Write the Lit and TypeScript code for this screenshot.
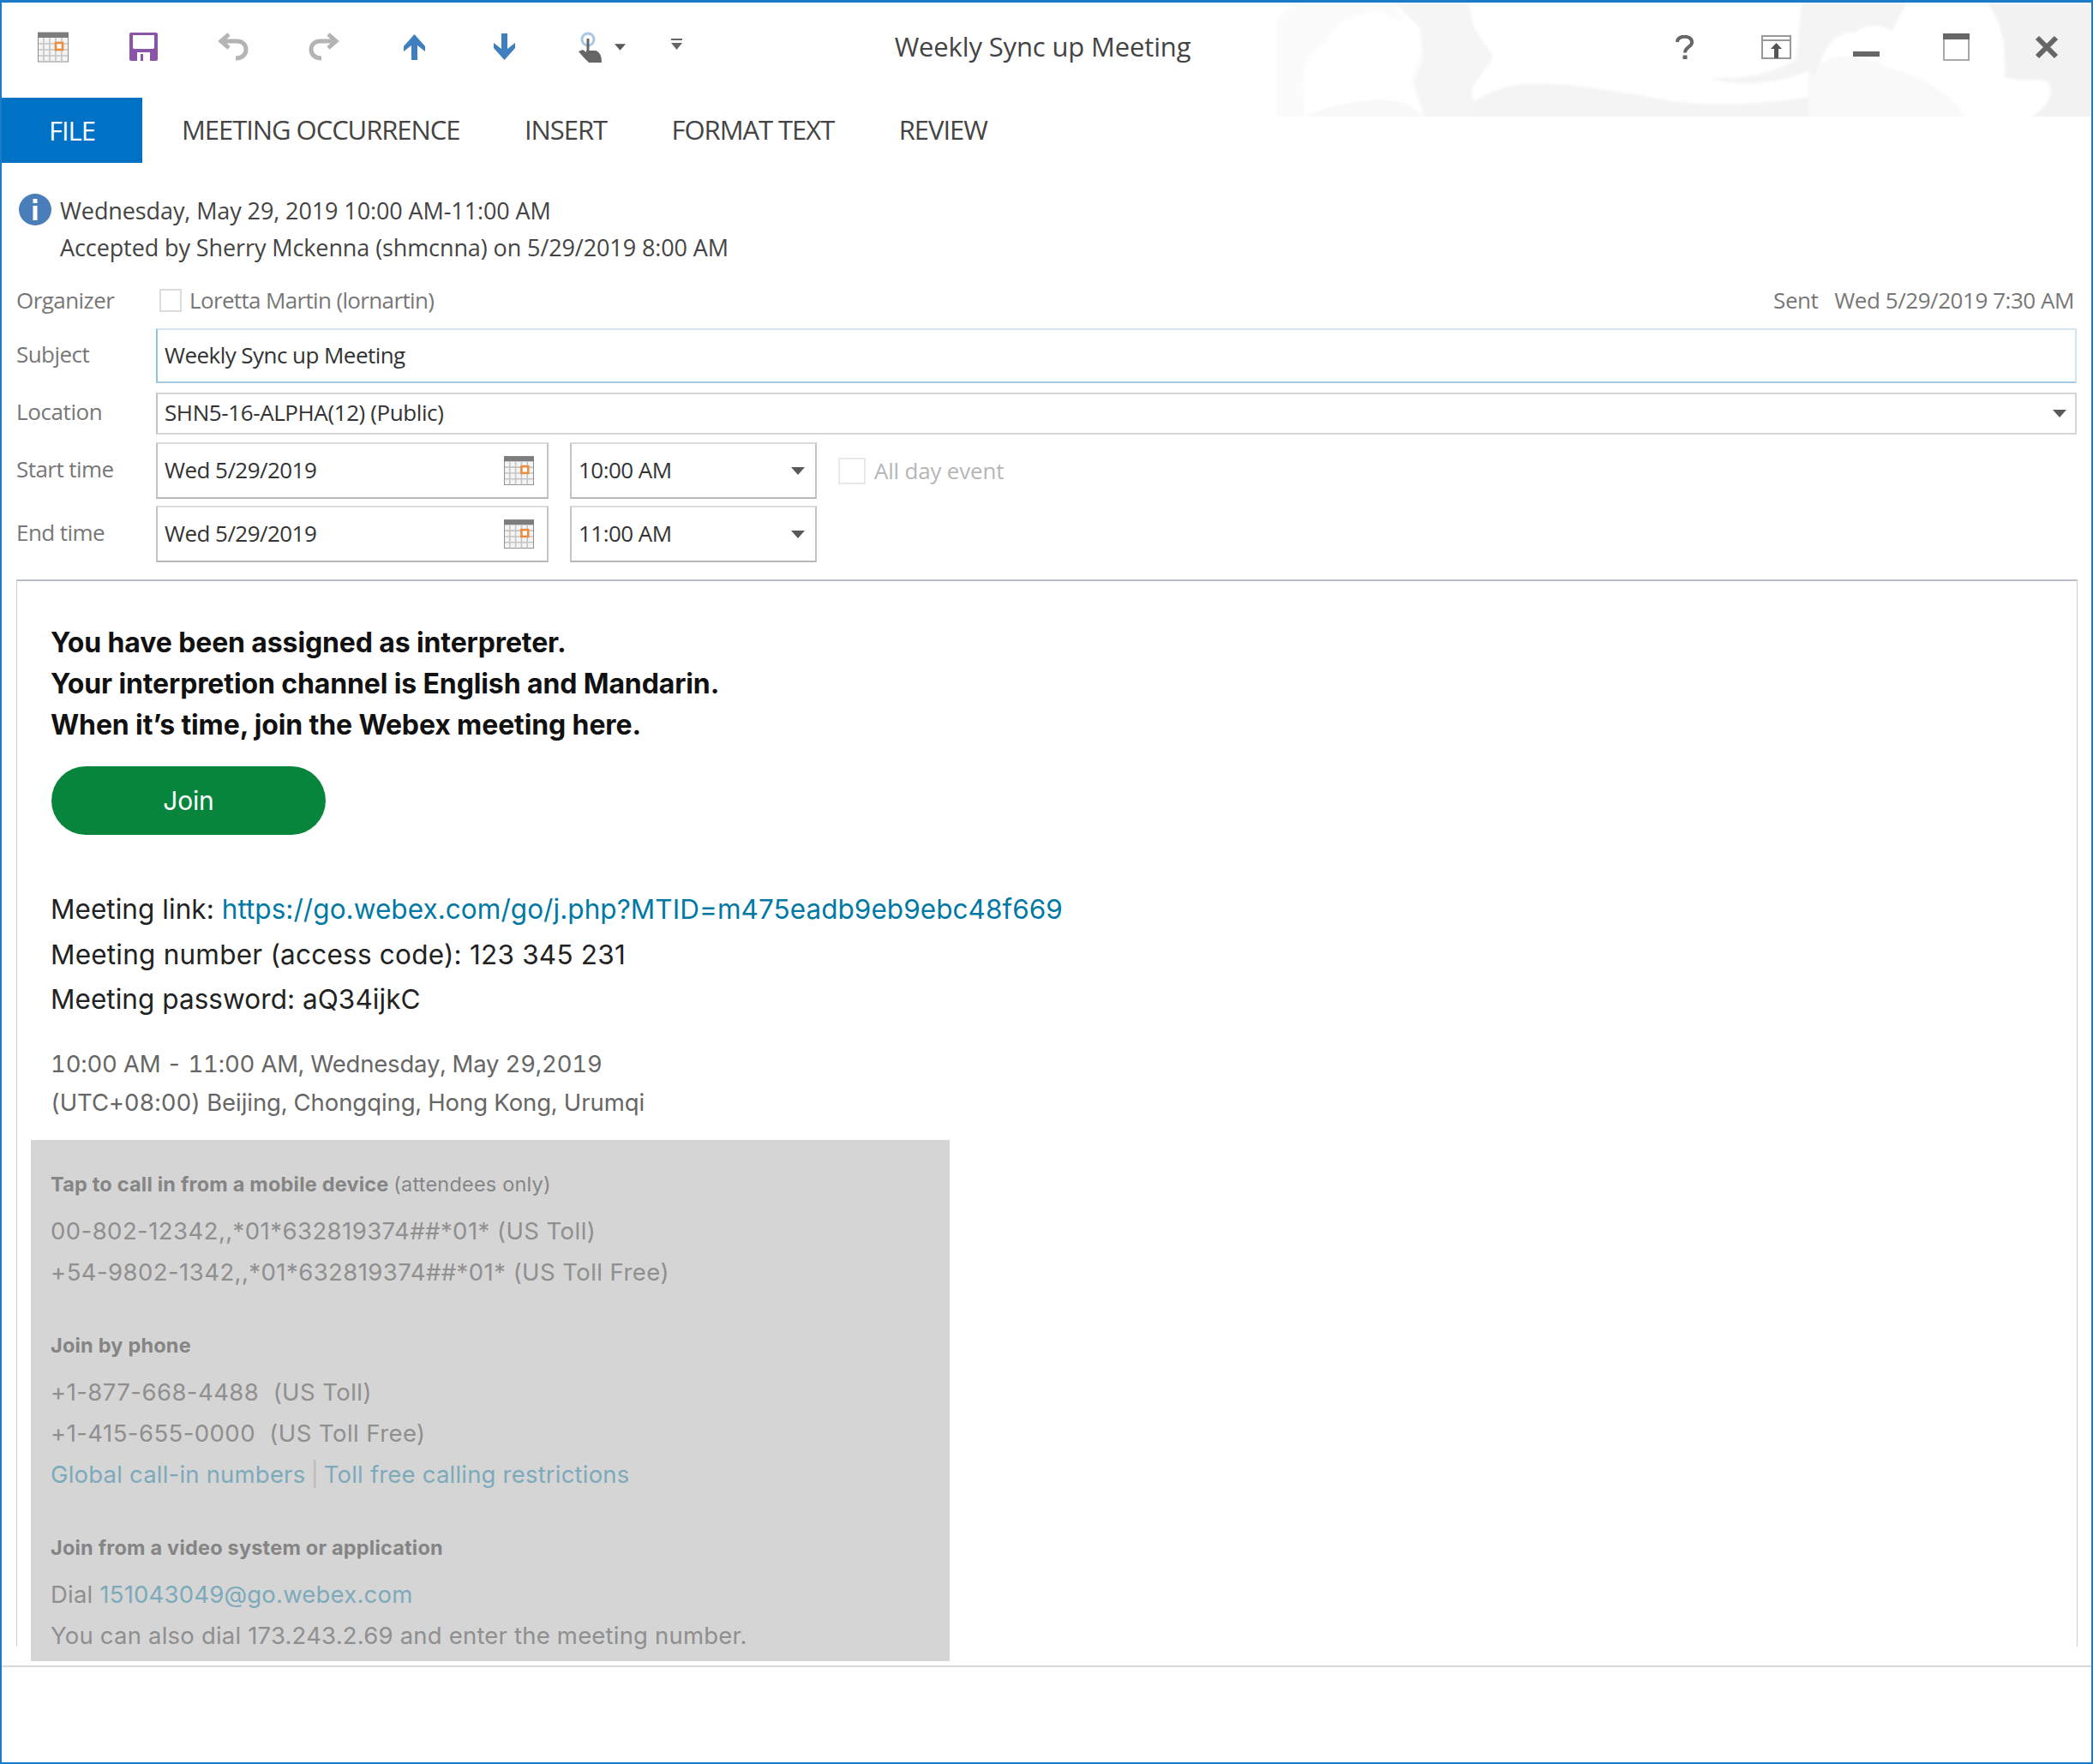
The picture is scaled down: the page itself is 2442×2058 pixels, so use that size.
import { LitElement, html, css, svg } from 'lit';
import { customElement } from 'lit/decorators.js';

const calendar = (w: number, h: number) => html`<svg width=${w} height=${h} viewBox="0 0 36 36">
  <rect x="0.5" y="1" width="35" height="34" fill="#f4f4f4" stroke="#8e8e8e" />
  <rect x="0" y="1" width="36" height="6" fill="#7d7d7d" />
  <path d="M1 14H35M1 21H35M1 28H35M7 7V35M14 7V35M21 7V35M28 7V35" stroke="#c4c4c4" stroke-width="1.6" fill="none" />
  <rect x="21" y="13" width="8" height="8" fill="#fff" stroke="#ed8b3a" stroke-width="2.6" />
</svg>`;

const caret = (w: number, h: number, fill = '#595959') => html`<svg width=${w} height=${h} viewBox="0 0 16 9"><path d="M0 0H16L8 9Z" fill=${fill} /></svg>`;

@customElement('app-root')
export class AppRoot extends LitElement {
  static styles = css`
    :host {
      display: block;
      width: 2442px;
      height: 2058px;
      box-sizing: border-box;
      border: 2px solid #1a7bc8;
      border-top-width: 3px;
      background: #fff;
      position: relative;
      overflow: hidden;
      font-family: 'Open Sans', 'Liberation Sans', sans-serif;
      color: #444;
    }
    .clouds {
      position: absolute;
      top: 0;
      right: 0;
    }
    .clouds g {
      filter: blur(1.5px);
    }
    .titlebar {
      position: relative;
      box-sizing: border-box;
      height: 111px;
      display: flex;
      align-items: center;
      padding: 0 0 8px 42px;
    }
    .qat {
      display: flex;
      align-items: center;
      flex: none;
    }
    .qat svg {
      display: block;
    }
    .m-save { margin-left: 71px; }
    .m-undo { margin-left: 70px; }
    .m-redo { margin-left: 70px; }
    .m-up { margin-left: 75px; }
    .m-down { margin-left: 80px; }
    .m-touch { margin-left: 74px; }
    .m-drop { margin-left: 15px; }
    .m-more { margin-left: 53px; margin-top: -6px; }
    .title {
      position: absolute;
      left: 0;
      right: 0;
      top: 30px;
      text-align: center;
      font-size: 31px;
      line-height: 42px;
      letter-spacing: -0.15px;
      color: #444;
      padding-right: 9px;
    }
    .winctl {
      margin-left: auto;
      display: flex;
      align-items: center;
      padding-right: 38px;
    }
    .winctl svg {
      display: block;
    }
    .c-ribbon { margin-left: 79px; }
    .c-min { margin-left: 72px; margin-top: 17px; }
    .c-max { margin-left: 74px; }
    .c-close { margin-left: 76px; }
    .tabs {
      display: flex;
      height: 76px;
      align-items: center;
      font-size: 31px;
      letter-spacing: -1.05px;
      color: #444;
    }
    .tab {
      margin-left: 75.5px;
      margin-bottom: 2px;
      white-space: nowrap;
    }
    .tab.first {
      margin-left: 46px;
    }
    .file {
      width: 164px;
      height: 76px;
      background: #0072c6;
      color: #fff;
      display: flex;
      align-items: center;
      justify-content: center;
    }
    .notice {
      position: relative;
      padding: 34px 0 0 68px;
      font-size: 27px;
      line-height: 43px;
      letter-spacing: -0.1px;
      color: #444;
    }
    .notice svg {
      position: absolute;
      left: 20px;
      top: 36px;
    }
    .form {
      padding: 17px 17px 0 17px;
    }
    .row {
      display: flex;
      align-items: center;
      font-size: 26px;
      letter-spacing: -0.55px;
    }
    .label {
      width: 163px;
      flex: none;
      color: #777;
      margin-bottom: 5px;
    }
    .organizer {
      height: 46px;
      margin-bottom: 10px;
      color: #777;
    }
    .organizer .label {
      margin-bottom: 0;
    }
    .org-name {
      letter-spacing: -0.65px;
    }
    .check {
      box-sizing: border-box;
      width: 26px;
      height: 27px;
      border: 2px solid #dcdcdc;
      margin-left: 4px;
      margin-right: 9px;
      flex: none;
    }
    .sent {
      margin-left: auto;
      padding-right: 3px;
      white-space: pre;
      letter-spacing: -0.45px;
    }
    .field {
      box-sizing: border-box;
      flex: 1;
      display: flex;
      align-items: center;
      padding-left: 8px;
      border: 2px solid #c6c6c6;
      color: #333;
      background: #fff;
    }
    .val {
      margin-bottom: 3px;
    }
    .subject-row { height: 64px; margin-bottom: 11px; }
    .subject-row .field {
      height: 64px;
      border-color: #d3e5f3 #d3e5f3 #a6cbe6 #93c1e2;
    }
    .location-row { height: 49px; margin-bottom: 9px; letter-spacing: -0.4px; }
    .location-row .field {
      height: 49px;
      border-color: #d6d6d6 #d6d6d6 #d6d6d6 #c2c2c2;
      justify-content: space-between;
      padding-right: 10px;
    }
    .time-row { height: 66px; margin-bottom: 8px; }
    .time-row .field {
      height: 100%;
      flex: none;
      border-color: #dcdcdc #c4c4c4 #b8b8b8 #c4c4c4;
      justify-content: space-between;
    }
    .date { width: 458px; padding-right: 15px; }
    .time { width: 288px; margin-left: 25px; padding-right: 12px; }
    .allday {
      display: flex;
      align-items: center;
      margin-left: 25px;
      color: #b6b6b6;
      font-size: 26px;
      letter-spacing: -0.2px;
    }
    .allday .check {
      width: 32px;
      height: 31px;
      border-color: #e9e9e9;
      margin: 0 10px 0 0;
    }
    .mail {
      box-sizing: border-box;
      margin: 20px 16px 0 17px;
      height: 1245px;
      border-style: solid;
      border-color: #b9bfc8 #cfcfcf;
      border-width: 2px 1px 0;
      padding: 48px 0 0 39px;
      font-family: Inter, Roboto, 'Liberation Sans', sans-serif;
    }
    .assign {
      font-size: 32px;
      line-height: 48px;
      font-weight: 700;
      letter-spacing: -0.12px;
      color: #111;
    }
    .join {
      width: 320px;
      height: 80px;
      margin: 24px 0 0 1px;
      border-radius: 40px;
      background: #07853c;
      color: #fff;
      font-size: 30px;
      letter-spacing: -0.2px;
      display: flex;
      align-items: center;
      justify-content: center;
    }
    .details {
      margin-top: 61px;
      font-size: 31.5px;
      line-height: 52.5px;
      letter-spacing: 0.05px;
      color: #222;
    }
    .details .wide {
      letter-spacing: 0.22px;
    }
    .details a {
      color: #0079a5;
      text-decoration: none;
    }
    .when {
      margin-top: 26px;
      font-size: 27.5px;
      line-height: 45px;
      letter-spacing: -0.06px;
      font-feature-settings: 'tnum';
      color: #666;
    }
    .when .first {
      letter-spacing: -0.19px;
    }
    .panel {
      box-sizing: border-box;
      width: 1072px;
      height: 608px;
      margin: 21px 0 0 -23px;
      padding: 32px 0 0 23px;
      background: #d5d5d5;
      color: #8f8f8f;
      font-size: 27.5px;
      line-height: 48px;
      letter-spacing: 0.2px;
    }
    .panel h4 {
      margin: 0;
      font-size: 23.5px;
      font-weight: 700;
      line-height: 40px;
      letter-spacing: 0.2px;
      color: #858585;
    }
    .panel h4 span {
      font-weight: 400;
    }
    .panel p {
      margin: 0;
    }
    .panel p.num {
      letter-spacing: 0.44px;
    }
    .panel .block {
      margin-bottom: 42px;
    }
    .panel h4 + p {
      margin-top: 10px;
    }
    .panel a {
      color: #7daabb;
      text-decoration: none;
    }
    .sep {
      color: #bcbcbc;
      padding: 0 6px;
    }
    .rule {
      margin-top: 22px;
      height: 2px;
      background: #d8d8d8;
    }
  `;

  render() {
    return html`
      <svg class="clouds" width="962" height="133" viewBox="1478 0 962 133">
        ${svg`<g>
          <path d="M1490 140V20L1510 0H1625L1660 67L1650 93L1663 140Z" fill="#fbfbfb" />
          <path d="M1525 140C1515 90 1520 60 1548 48C1550 30 1575 12 1610 12C1640 20 1655 40 1655 67L1645 93L1658 120V140Z" fill="#fff" />
          <path d="M1510 140C1550 118 1590 112 1620 114C1640 116 1650 120 1663 140Z" fill="#f8f8f8" />
          <path d="M1627 0H1713L1720 30L1743 63L1717 100L1722 140H1663L1650 93L1660 67L1657 30Z" fill="#f5f5f5" />
          <path d="M1717 140V117C1740 102 1760 96 1783 95C1830 93 1900 105 1950 115C2000 122 2060 118 2110 110V140Z" fill="#f4f4f4" />
          <path d="M2110 140V80C2140 55 2180 60 2200 75C2240 85 2280 105 2295 140Z" fill="#f9f9f9" />
          <path d="M2102 0H2225C2215 18 2210 28 2208 33C2195 25 2175 25 2165 35C2140 30 2125 60 2118 85L2108 80C2080 93 2030 100 1995 88C2040 90 2075 80 2095 67C2098 50 2100 20 2102 0Z" fill="#f4f4f4" />
          <path d="M2319 0H2445V140H2360C2385 125 2395 115 2392 95C2380 85 2365 95 2339 87C2340 60 2340 30 2319 0Z" fill="#f2f2f2" />
        </g>`}
      </svg>
      <div class="titlebar">
        <div class="qat">
          ${calendar(36, 36)}
          <svg class="m-save" width="33" height="33" viewBox="0 0 33 33">
            <path d="M2 0H31Q33 0 33 2V31Q33 33 31 33H2Q0 33 0 31V2Q0 0 2 0Z" fill="#8a55a9" />
            <path d="M4 3H29V17Q29 19 27 19H6Q4 19 4 17Z" fill="#fff" />
            <rect x="9" y="23" width="15" height="10" fill="#fff" />
            <rect x="13" y="25" width="3" height="8" fill="#8a55a9" />
          </svg>
          <svg class="m-undo" width="36" height="33" viewBox="0 0 36 33">
            <path d="M13 2L4 10L13 18M4 10H22C29 10 33 14 33 20C33 26 28 30 21 30" fill="none" stroke="#b4b4b4" stroke-width="5" />
          </svg>
          <svg class="m-redo" width="36" height="33" viewBox="0 0 36 33">
            <path d="M23 2L32 10L23 18M32 10H14C7 10 3 14 3 20C3 26 8 30 15 30" fill="none" stroke="#b4b4b4" stroke-width="5" />
          </svg>
          <svg class="m-up" width="25" height="30" viewBox="0 0 25 30">
            <path d="M12.5 0L25 14V20L16 13V30H9V13L0 20V14Z" fill="#3f7fbf" />
          </svg>
          <svg class="m-down" width="25" height="31" viewBox="0 0 25 31">
            <path d="M12.5 31L25 17V11L16 18V0H9V18L0 11V17Z" fill="#3f7fbf" />
          </svg>
          <svg class="m-touch" width="27" height="36" viewBox="0 0 27 36">
            <circle cx="11" cy="9" r="7" fill="none" stroke="#a9c6e4" stroke-width="3" />
            <path d="M11 8V24" stroke="#666" stroke-width="3" />
            <path d="M0 23L5 21L9 24V22H20C25 24 27 28 27 36H12L6 30Z" fill="#666" />
          </svg>
          <span class="m-drop">${caret(13, 8)}</span>
          <svg class="m-more" width="13" height="13" viewBox="0 0 13 13">
            <path d="M0 0H13V2H0ZM0 5H13L6.5 13Z" fill="#666" />
          </svg>
        </div>
        <div class="title">Weekly Sync up Meeting</div>
        <div class="winctl">
          <svg width="21" height="28" viewBox="0 0 21 28">
            <path d="M2 8C2 3.5 6 1.8 10.5 1.8C15.5 1.8 19 4 19 8.5C19 14 11 13.5 11 20.5" fill="none" stroke="#666" stroke-width="4" />
            <rect x="8.5" y="23.5" width="5" height="4.5" fill="#666" />
          </svg>
          <svg class="c-ribbon" width="35" height="28" viewBox="0 0 35 28">
            <rect x="1" y="1" width="33" height="26" fill="none" stroke="#999" stroke-width="2" />
            <path d="M1 6H34" stroke="#999" stroke-width="2" />
            <path d="M17.5 9L24 16H20V27H15V16H11Z" fill="#555" />
          </svg>
          <svg class="c-min" width="31" height="6" viewBox="0 0 31 6"><rect width="31" height="6" fill="#666" /></svg>
          <svg class="c-max" width="31" height="32" viewBox="0 0 31 32">
            <rect x="1" y="1" width="29" height="30" fill="none" stroke="#a8a8a8" stroke-width="2" />
            <rect x="0" y="0" width="31" height="7" fill="#666" />
          </svg>
          <svg class="c-close" width="28" height="28" viewBox="0 0 28 28">
            <path d="M3 3L25 25M25 3L3 25" stroke="#666" stroke-width="6" />
          </svg>
        </div>
      </div>
      <div class="tabs">
        <div class="file">FILE</div>
        <div class="tab first">MEETING OCCURRENCE</div>
        <div class="tab">INSERT</div>
        <div class="tab">FORMAT TEXT</div>
        <div class="tab">REVIEW</div>
      </div>
      <div class="notice">
        <svg width="38" height="37" viewBox="0 0 38 37">
          <ellipse cx="19" cy="18.5" rx="19" ry="18.5" fill="#4a7eba" />
          <rect x="16.5" y="6" width="5" height="5" fill="#fff" />
          <rect x="16.5" y="14" width="5" height="17" fill="#fff" />
        </svg>
        <div>Wednesday, May 29, 2019 10:00 AM-11:00 AM</div>
        <div>Accepted by Sherry Mckenna (shmcnna) on 5/29/2019 8:00 AM</div>
      </div>
      <div class="form">
        <div class="row organizer">
          <div class="label">Organizer</div>
          <div class="check"></div>
          <div class="org-name">Loretta Martin (lornartin)</div>
          <div class="sent">Sent   Wed 5/29/2019 7:30 AM</div>
        </div>
        <div class="row subject-row">
          <div class="label">Subject</div>
          <div class="field"><span class="val">Weekly Sync up Meeting</span></div>
        </div>
        <div class="row location-row">
          <div class="label">Location</div>
          <div class="field"><span class="val">SHN5-16-ALPHA(12) (Public)</span>${caret(16, 9)}</div>
        </div>
        <div class="row time-row">
          <div class="label">Start time</div>
          <div class="field date"><span class="val">Wed 5/29/2019</span>${calendar(35, 36)}</div>
          <div class="field time"><span class="val">10:00 AM</span>${caret(16, 9)}</div>
          <div class="allday"><div class="check"></div>All day event</div>
        </div>
        <div class="row time-row">
          <div class="label">End time</div>
          <div class="field date"><span class="val">Wed 5/29/2019</span>${calendar(35, 36)}</div>
          <div class="field time"><span class="val">11:00 AM</span>${caret(16, 9)}</div>
        </div>
      </div>
      <div class="mail">
        <div class="assign">
          <div>You have been assigned as interpreter.</div>
          <div>Your interpretion channel is English and Mandarin.</div>
          <div>When it’s time, join the Webex meeting here.</div>
        </div>
        <div class="join">Join</div>
        <div class="details">
          <div>Meeting link: <a>https://go.webex.com/go/j.php?MTID=m475eadb9eb9ebc48f669</a></div>
          <div class="wide">Meeting number (access code): 123 345 231</div>
          <div>Meeting password: aQ34ijkC</div>
        </div>
        <div class="when">
          <div class="first">10:00 AM - 11:00 AM, Wednesday, May 29,2019</div>
          <div>(UTC+08:00) Beijing, Chongqing, Hong Kong, Urumqi</div>
        </div>
        <div class="panel">
          <div class="block">
            <h4>Tap to call in from a mobile device <span>(attendees only)</span></h4>
            <p class="num">00-802-12342,,*01*632819374##*01* (US Toll)</p>
            <p class="num">+54-9802-1342,,*01*632819374##*01* (US Toll Free)</p>
          </div>
          <div class="block">
            <h4>Join by phone</h4>
            <p class="num">+1-877-668-4488&nbsp; (US Toll)</p>
            <p class="num">+1-415-655-0000&nbsp; (US Toll Free)</p>
            <p><a>Global call-in numbers</a><span class="sep">|</span><a>Toll free calling restrictions</a></p>
          </div>
          <div>
            <h4>Join from a video system or application</h4>
            <p>Dial <a>151043049@go.webex.com</a></p>
            <p>You can also dial 173.243.2.69 and enter the meeting number.</p>
          </div>
        </div>
      </div>
      <div class="rule"></div>
    `;
  }
}
